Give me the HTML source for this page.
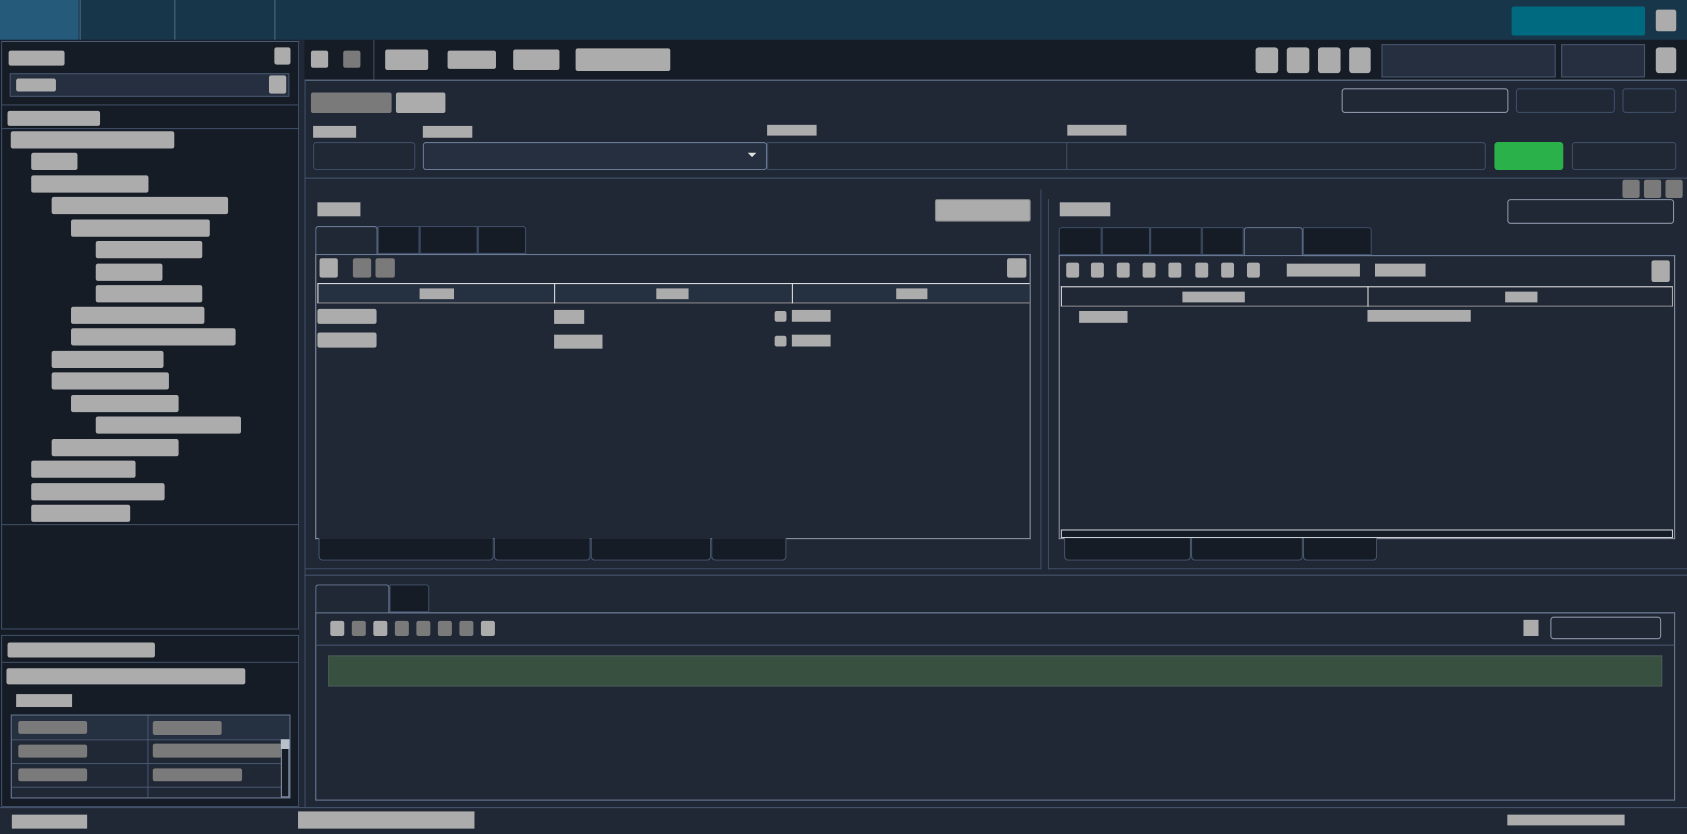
<!DOCTYPE html>
<html><head><meta charset="utf-8"><style>
*{margin:0;padding:0;box-sizing:border-box}
html,body{width:1687px;height:834px;overflow:hidden;background:#202735;font-family:"Liberation Sans",sans-serif}
#c{position:absolute;left:0;top:0;width:1568px;height:775px;transform:scale(1.07589,1.07613);transform-origin:0 0;background:#202735}
#c div{position:absolute}
.g{background:#acacac;border-radius:2px}
.d{background:#7a7a7a;border-radius:2px}
.b{border:1px solid #3d4d66}
.bl{border:1px solid #8a96a8}
.dk{background:#161c25}
.in{background:#252f3f;border:1px solid #46556e}
</style></head><body><div id="c">
<div style="left:0;top:0;width:1568px;height:37px;background:#18364a"></div>
<div style="left:0;top:0;width:73px;height:37px;background:#255a7a"></div>
<div style="left:74px;top:0;width:1px;height:37px;background:#4a6a80"></div>
<div style="left:162px;top:0;width:1px;height:37px;background:#4a6a80"></div>
<div style="left:255px;top:0;width:1px;height:37px;background:#4a6a80"></div>
<div style="left:1405px;top:6px;width:124px;height:27px;background:#006b80;border-radius:2px"></div>
<div class="g" style="left:1539px;top:9px;width:19px;height:20px"></div>

<div class="dk" style="left:0;top:37px;width:278px;height:713px"></div>
<div class="b" style="left:1px;top:38px;width:277px;height:547px;border-top-color:#4a5c78"></div>
<div class="g" style="left:8px;top:47px;width:52px;height:14px"></div>
<div class="g" style="left:255px;top:44px;width:15px;height:16px"></div>
<div class="in" style="left:9px;top:68px;width:260px;height:22px"></div>
<div class="g" style="left:15px;top:73px;width:37px;height:12px"></div>
<div class="g" style="left:250px;top:70px;width:16px;height:17px"></div>
<div style="left:1px;top:97px;width:277px;height:1px;background:#3d4d66"></div>
<div class="g" style="left:7px;top:103px;width:86px;height:14px"></div>
<div style="left:1px;top:119px;width:277px;height:1px;background:#3d4d66"></div>
<div class="g" style="left:10px;top:122px;width:152px;height:16px"></div>
<div class="g" style="left:29px;top:142px;width:43px;height:16px"></div>
<div class="g" style="left:29px;top:163px;width:109px;height:16px"></div>
<div class="g" style="left:48px;top:183px;width:164px;height:16px"></div>
<div class="g" style="left:66px;top:204px;width:129px;height:16px"></div>
<div class="g" style="left:89px;top:224px;width:99px;height:16px"></div>
<div class="g" style="left:89px;top:245px;width:62px;height:16px"></div>
<div class="g" style="left:89px;top:265px;width:99px;height:16px"></div>
<div class="g" style="left:66px;top:285px;width:124px;height:16px"></div>
<div class="g" style="left:66px;top:305px;width:153px;height:16px"></div>
<div class="g" style="left:48px;top:326px;width:104px;height:16px"></div>
<div class="g" style="left:48px;top:346px;width:109px;height:16px"></div>
<div class="g" style="left:66px;top:367px;width:100px;height:16px"></div>
<div class="g" style="left:89px;top:387px;width:135px;height:16px"></div>
<div class="g" style="left:48px;top:408px;width:118px;height:16px"></div>
<div class="g" style="left:29px;top:428px;width:97px;height:16px"></div>
<div class="g" style="left:29px;top:449px;width:124px;height:16px"></div>
<div class="g" style="left:29px;top:469px;width:92px;height:16px"></div>
<div style="left:1px;top:487px;width:277px;height:1px;background:#3d4d66"></div>

<div class="b" style="left:1px;top:590px;width:277px;height:160px"></div>
<div class="g" style="left:7px;top:597px;width:137px;height:14px"></div>
<div style="left:1px;top:615px;width:277px;height:1px;background:#3d4d66"></div>
<div class="g" style="left:6px;top:621px;width:222px;height:15px"></div>
<div class="g" style="left:15px;top:645px;width:52px;height:12px;border-radius:0"></div>
<div style="left:10px;top:664px;width:260px;height:78px;border:1px solid #6a7a94;background:#202735"></div>
<div style="left:11px;top:665px;width:258px;height:22px;background:#253040"></div>
<div style="left:137px;top:665px;width:1px;height:76px;background:#46556e"></div>
<div style="left:11px;top:687px;width:250px;height:1px;background:#46556e"></div>
<div style="left:11px;top:709px;width:250px;height:1px;background:#46556e"></div>
<div style="left:11px;top:731px;width:250px;height:1px;background:#46556e"></div>
<div class="d" style="left:17px;top:670px;width:64px;height:12px"></div>
<div class="d" style="left:142px;top:670px;width:64px;height:13px"></div>
<div class="d" style="left:17px;top:692px;width:64px;height:12px"></div>
<div class="d" style="left:142px;top:691px;width:120px;height:13px"></div>
<div class="d" style="left:17px;top:714px;width:64px;height:12px"></div>
<div class="d" style="left:142px;top:714px;width:83px;height:12px"></div>
<div style="left:261px;top:687px;width:8px;height:54px;background:#161c25;border:1px solid #8a96a8"></div>
<div style="left:261px;top:687px;width:8px;height:9px;background:#b8c0cc"></div>

<div style="left:0;top:750px;width:1568px;height:1px;background:#46556e"></div>
<div class="g" style="left:11px;top:757px;width:70px;height:13px;border-radius:0"></div>
<div class="g" style="left:277px;top:754px;width:164px;height:16px;border-radius:0"></div>
<div class="g" style="left:1401px;top:757px;width:109px;height:10px;border-radius:0"></div>

<div class="dk" style="left:283px;top:37px;width:1285px;height:37px"></div>
<div class="g" style="left:289px;top:47px;width:16px;height:16px"></div>
<div class="d" style="left:319px;top:47px;width:16px;height:16px"></div>
<div style="left:347px;top:37px;width:1px;height:37px;background:#3d4d66"></div>
<div class="g" style="left:358px;top:46px;width:40px;height:19px"></div>
<div class="g" style="left:416px;top:47px;width:45px;height:17px"></div>
<div class="g" style="left:477px;top:46px;width:43px;height:19px"></div>
<div class="g" style="left:535px;top:45px;width:88px;height:21px"></div>
<div class="g" style="left:1167px;top:44px;width:21px;height:24px;border-radius:3px"></div>
<div class="g" style="left:1196px;top:44px;width:21px;height:24px;border-radius:3px"></div>
<div class="g" style="left:1225px;top:44px;width:21px;height:24px;border-radius:3px"></div>
<div class="g" style="left:1254px;top:44px;width:20px;height:24px;border-radius:3px"></div>
<div class="in" style="left:1284px;top:41px;width:162px;height:31px"></div>
<div class="in" style="left:1451px;top:41px;width:78px;height:31px"></div>
<div class="g" style="left:1539px;top:44px;width:19px;height:24px;border-radius:3px"></div>
<div style="left:283px;top:74px;width:1285px;height:1px;background:#6a7a94"></div>
<div style="left:283px;top:74px;width:1px;height:676px;background:#3d4d66"></div>

<div class="d" style="left:289px;top:86px;width:75px;height:19px"></div>
<div class="g" style="left:368px;top:86px;width:46px;height:19px"></div>
<div style="left:1247px;top:82px;width:155px;height:23px;border:1px solid #8a96a8;border-radius:3px"></div>
<div class="b" style="left:1409px;top:82px;width:92px;height:23px;border-radius:3px"></div>
<div class="b" style="left:1508px;top:82px;width:50px;height:23px;border-radius:3px"></div>
<div class="g" style="left:291px;top:117px;width:40px;height:11px;border-radius:0"></div>
<div class="g" style="left:393px;top:117px;width:46px;height:11px;border-radius:0"></div>
<div class="g" style="left:713px;top:116px;width:46px;height:10px;border-radius:0"></div>
<div class="g" style="left:992px;top:116px;width:55px;height:10px;border-radius:0"></div>
<div class="b" style="left:291px;top:132px;width:95px;height:26px;border-radius:3px"></div>
<div class="in" style="left:393px;top:132px;width:320px;height:26px;border-color:#6a7a94;border-radius:3px"></div>
<div style="left:695px;top:142px;width:0;height:0;border-left:4px solid transparent;border-right:4px solid transparent;border-top:4px solid #e0e0e0"></div>
<div class="b" style="left:713px;top:132px;width:668px;height:26px;border-radius:0 3px 3px 0"></div>
<div style="left:991px;top:132px;width:1px;height:26px;background:#3d4d66"></div>
<div style="left:1389px;top:132px;width:64px;height:26px;background:#2bb14a;border-radius:3px"></div>
<div class="b" style="left:1461px;top:132px;width:97px;height:26px;border-radius:3px"></div>
<div style="left:283px;top:165px;width:1285px;height:1px;background:#46556e"></div>
<div class="d" style="left:1508px;top:167px;width:16px;height:17px"></div>
<div class="d" style="left:1528px;top:167px;width:16px;height:17px"></div>
<div class="d" style="left:1548px;top:167px;width:16px;height:17px"></div>

<div class="b" style="left:283px;top:176px;width:685px;height:353px;border-top:none;border-left:none"></div>
<div class="g" style="left:295px;top:188px;width:40px;height:13px;border-radius:0"></div>
<div class="g" style="left:869px;top:185px;width:89px;height:21px;border:1px solid #888"></div>
<div style="left:293px;top:210px;width:58px;height:27px;border:1px solid #6a7a94;border-bottom:none;background:#202735;border-radius:3px 3px 0 0"></div>
<div class="dk b" style="left:351px;top:210px;width:39px;height:26px"></div>
<div class="dk b" style="left:390px;top:210px;width:54px;height:26px"></div>
<div class="dk b" style="left:444px;top:210px;width:45px;height:26px;border-radius:0 3px 0 0"></div>
<div style="left:293px;top:236px;width:665px;height:265px;border:1px solid #8a93a3;border-top-color:#6a7a94"></div>
<div style="left:351px;top:236px;width:607px;height:1px;background:#6a7a94"></div>
<div class="g" style="left:297px;top:240px;width:17px;height:18px"></div>
<div class="d" style="left:328px;top:240px;width:17px;height:18px"></div>
<div class="d" style="left:349px;top:240px;width:18px;height:18px"></div>
<div class="g" style="left:936px;top:240px;width:18px;height:18px"></div>
<div style="left:295px;top:263px;width:662px;height:19px;border-top:1px solid #ddd;border-left:1px solid #ddd;border-bottom:1px solid #888;background:#253040"></div>
<div style="left:515px;top:263px;width:1px;height:19px;background:#ddd"></div>
<div style="left:736px;top:263px;width:1px;height:19px;background:#ddd"></div>
<div class="g" style="left:390px;top:268px;width:32px;height:10px;border-radius:0"></div>
<div class="g" style="left:610px;top:268px;width:30px;height:10px;border-radius:0"></div>
<div class="g" style="left:833px;top:268px;width:29px;height:10px;border-radius:0"></div>
<div class="g" style="left:295px;top:287px;width:55px;height:14px"></div>
<div class="g" style="left:515px;top:288px;width:28px;height:13px;border-radius:0"></div>
<div class="g" style="left:720px;top:289px;width:11px;height:10px"></div>
<div class="g" style="left:736px;top:288px;width:36px;height:11px;border-radius:0"></div>
<div class="g" style="left:295px;top:309px;width:55px;height:14px"></div>
<div class="g" style="left:515px;top:311px;width:45px;height:13px;border-radius:0"></div>
<div class="g" style="left:720px;top:312px;width:11px;height:10px"></div>
<div class="g" style="left:736px;top:311px;width:36px;height:11px;border-radius:0"></div>
<div class="dk" style="left:296px;top:500px;width:163px;height:21px;border:1px solid #46556e;border-top:none;border-radius:0 0 4px 4px"></div>
<div class="dk" style="left:459px;top:500px;width:90px;height:21px;border:1px solid #46556e;border-top:none;border-radius:0 0 4px 4px"></div>
<div class="dk" style="left:549px;top:500px;width:112px;height:21px;border:1px solid #46556e;border-top:none;border-radius:0 0 4px 4px"></div>
<div class="dk" style="left:661px;top:500px;width:70px;height:21px;border:1px solid #46556e;border-top:none;border-radius:0 0 4px 4px"></div>

<div class="b" style="left:974px;top:185px;width:594px;height:344px;border-top:none;border-right:none"></div>
<div class="g" style="left:985px;top:188px;width:47px;height:13px;border-radius:0"></div>
<div style="left:1401px;top:185px;width:155px;height:23px;border:1px solid #8a96a8;border-radius:3px"></div>
<div class="dk b" style="left:984px;top:211px;width:40px;height:26px;border-radius:3px 0 0 0"></div>
<div class="dk b" style="left:1024px;top:211px;width:45px;height:26px"></div>
<div class="dk b" style="left:1069px;top:211px;width:48px;height:26px"></div>
<div class="dk b" style="left:1117px;top:211px;width:39px;height:26px"></div>
<div style="left:1156px;top:211px;width:55px;height:27px;border:1px solid #6a7a94;border-bottom:none;background:#202735;border-radius:3px 3px 0 0"></div>
<div class="dk b" style="left:1211px;top:211px;width:64px;height:26px;border-radius:0 3px 0 0"></div>
<div style="left:984px;top:237px;width:573px;height:264px;border:1px solid #8a93a3;border-top-color:#6a7a94"></div>
<div style="left:1211px;top:237px;width:346px;height:1px;background:#6a7a94"></div>
<div class="g" style="left:991px;top:244px;width:12px;height:14px"></div>
<div class="g" style="left:1014px;top:244px;width:12px;height:14px"></div>
<div class="g" style="left:1038px;top:244px;width:12px;height:14px"></div>
<div class="g" style="left:1062px;top:244px;width:12px;height:14px"></div>
<div class="g" style="left:1086px;top:244px;width:12px;height:14px"></div>
<div class="g" style="left:1111px;top:244px;width:12px;height:14px"></div>
<div class="g" style="left:1135px;top:244px;width:12px;height:14px"></div>
<div class="g" style="left:1159px;top:244px;width:12px;height:14px"></div>
<div class="g" style="left:1196px;top:245px;width:68px;height:12px;border-radius:0"></div>
<div class="g" style="left:1278px;top:245px;width:47px;height:12px;border-radius:0"></div>
<div class="g" style="left:1535px;top:242px;width:17px;height:20px"></div>
<div style="left:986px;top:266px;width:569px;height:19px;border-top:1px solid #ddd;border-left:1px solid #ddd;border-right:1px solid #aaa;border-bottom:1px solid #888"></div>
<div style="left:1271px;top:266px;width:1px;height:19px;background:#ddd"></div>
<div class="g" style="left:1099px;top:271px;width:58px;height:10px;border-radius:0"></div>
<div class="g" style="left:1399px;top:271px;width:30px;height:10px;border-radius:0"></div>
<div class="g" style="left:1003px;top:289px;width:45px;height:11px;border-radius:0"></div>
<div class="g" style="left:1271px;top:288px;width:96px;height:11px;border-radius:0"></div>
<div style="left:986px;top:492px;width:569px;height:8px;background:#161c25;border:1px solid #c8ccd4"></div>
<div class="dk" style="left:989px;top:500px;width:118px;height:21px;border:1px solid #46556e;border-top:none;border-radius:0 0 4px 4px"></div>
<div class="dk" style="left:1107px;top:500px;width:104px;height:21px;border:1px solid #46556e;border-top:none;border-radius:0 0 4px 4px"></div>
<div class="dk" style="left:1211px;top:500px;width:69px;height:21px;border:1px solid #46556e;border-top:none;border-radius:0 0 4px 4px"></div>

<div style="left:283px;top:534px;width:1285px;height:1px;background:#46556e"></div>
<div style="left:293px;top:543px;width:69px;height:27px;border:1px solid #6a7a94;border-bottom:none;background:#202735;border-radius:3px 3px 0 0"></div>
<div class="dk b" style="left:362px;top:543px;width:37px;height:26px;border-radius:0 3px 0 0"></div>
<div style="left:293px;top:569px;width:1264px;height:175px;border:1px solid #6a7a94"></div>
<div style="left:362px;top:569px;width:1195px;height:1px;background:#6a7a94"></div>
<div class="g" style="left:307px;top:577px;width:13px;height:14px"></div>
<div class="d" style="left:327px;top:577px;width:13px;height:14px"></div>
<div class="g" style="left:347px;top:577px;width:13px;height:14px"></div>
<div class="d" style="left:367px;top:577px;width:13px;height:14px"></div>
<div class="d" style="left:387px;top:577px;width:13px;height:14px"></div>
<div class="d" style="left:407px;top:577px;width:13px;height:14px"></div>
<div class="d" style="left:427px;top:577px;width:13px;height:14px"></div>
<div class="g" style="left:447px;top:577px;width:13px;height:14px"></div>
<div class="g" style="left:1416px;top:576px;width:14px;height:15px;border-radius:0"></div>
<div style="left:1441px;top:573px;width:103px;height:21px;border:1px solid #8a96a8;border-radius:3px"></div>
<div style="left:294px;top:599px;width:1262px;height:1px;background:#46556e"></div>
<div style="left:305px;top:609px;width:1240px;height:29px;background:#37503f;border:1px solid #4a5a58"></div>
</div></body></html>
